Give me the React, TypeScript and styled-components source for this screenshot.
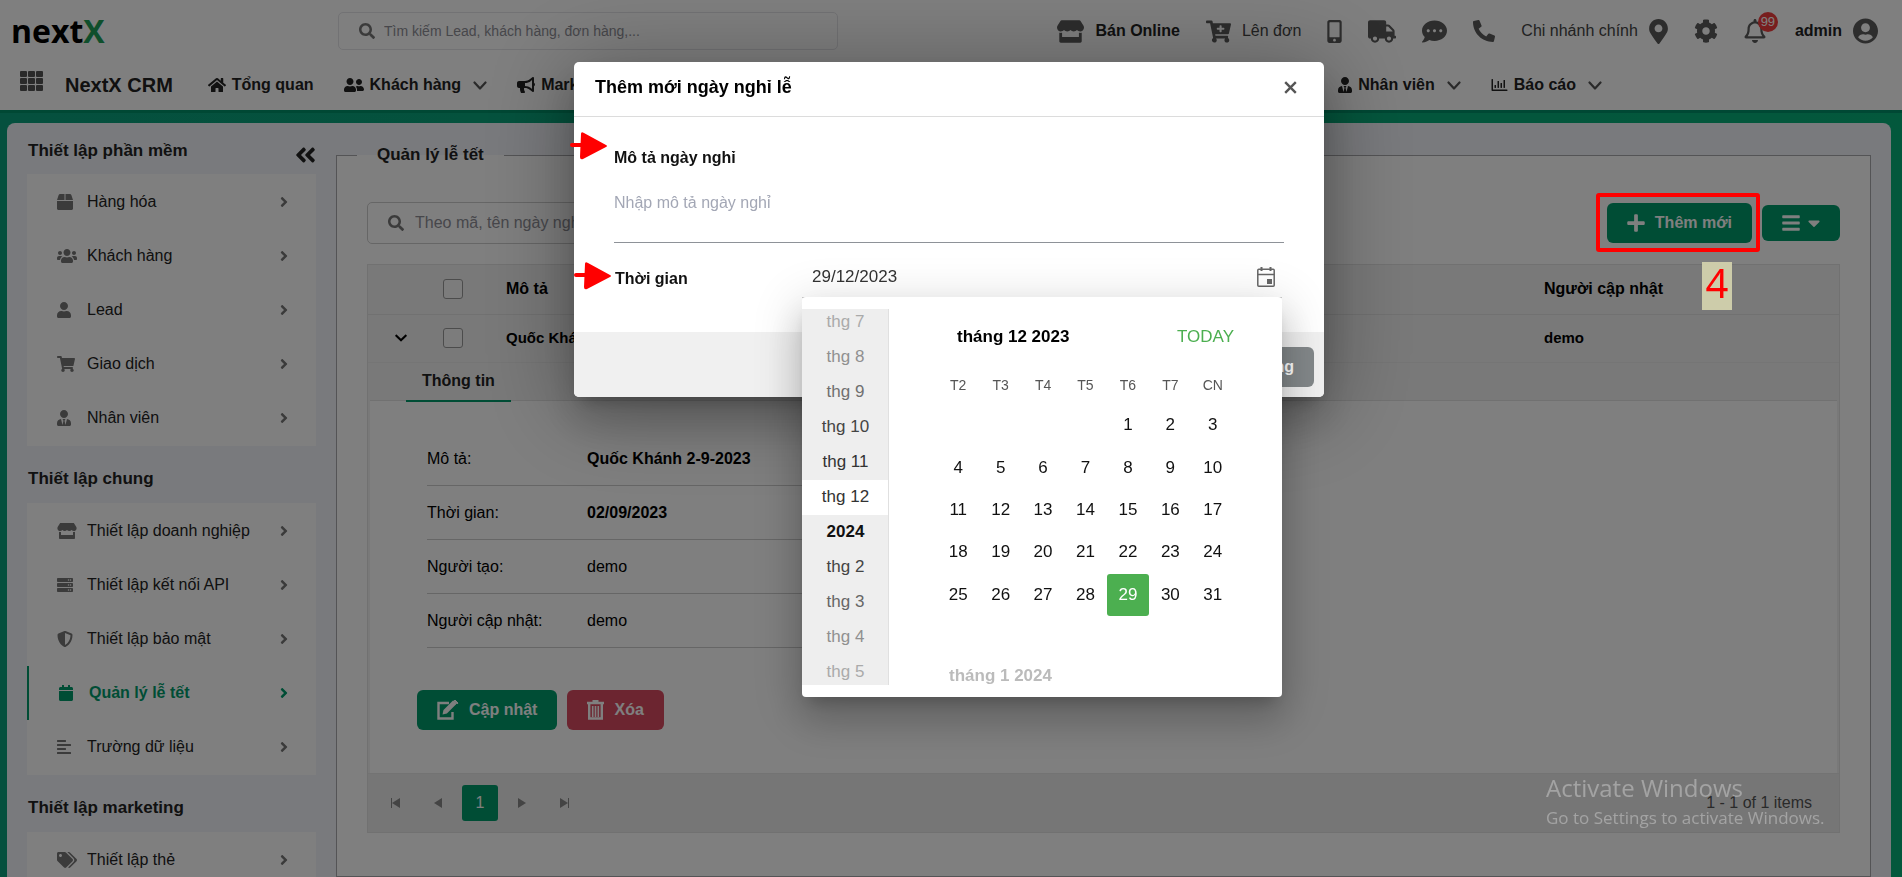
import React from "react";
import styled, { createGlobalStyle, css } from "styled-components";
import type { IconType } from "react-icons";
import {
  FaAlignLeft, FaAngleDoubleLeft, FaAngleRight, FaBox, FaBullhorn, FaCalendar, FaCaretDown, FaCartPlus,
  FaChevronDown, FaCog, FaCommentDots, FaHome, FaMapMarkerAlt, FaPhoneAlt, FaPlus, FaRegBell,
  FaRegChartBar, FaSearch, FaServer, FaShieldAlt, FaShoppingCart, FaStore, FaTags, FaTruck,
  FaUser, FaUserCircle, FaUserFriends, FaUserTie, FaUsers, FaMobileAlt, FaBars,
} from "react-icons/fa";

const GREEN = "#009b6b";

const GlobalStyle = createGlobalStyle`
  *, *::before, *::after { box-sizing: border-box; }
  body {
    margin: 0;
    overflow: hidden;
    font: 16px/20px "Liberation Sans", Arial, sans-serif;
    color: #222;
  }
  button, input { font: inherit; color: inherit; }
  button { border: 0; background: none; padding: 0; cursor: pointer; }
  a { color: inherit; text-decoration: none; }
  svg { display: block; flex: none; }
`;

const GlyphBox = styled.i<{ $w: number; $h: number }>`
  flex: none;
  display: block;
  > svg { width: ${p => p.$w}px; height: ${p => p.$h}px; }
`;
const Glyph = ({ of: Icon, w = 16, h = 16 }: { of: IconType; w?: number; h?: number }) => (
  <GlyphBox $w={w} $h={h}><Icon /></GlyphBox>
);

const Shell = styled.div`
  height: 100vh;
  display: flex;
  flex-direction: column;
  overflow: hidden;
  background: linear-gradient(90deg, #0aa07c, #06b078 100%);
`;

/* ---------- header ---------- */

const Header = styled.header`
  flex: none;
  background: #fff;
  border-bottom: 3px solid #009068;
  box-sizing: content-box;
`;
const TopBar = styled.div`
  display: flex;
  align-items: center;
  height: 62px;
  padding: 0 24px 0 11px;
`;
const Logo = styled.a`
  width: 327px;
  font: 700 32px/40px "Open Sans", sans-serif;
  color: #000;
  span { color: #1f9f58; }
`;
const SearchBox = styled.label<{ $tall?: boolean }>`
  display: flex;
  align-items: center;
  gap: ${p => (p.$tall ? 11 : 9)}px;
  width: 500px;
  height: ${p => (p.$tall ? 42 : 38)}px;
  padding: 0 20px;
  border: 1px solid ${p => (p.$tall ? "#ccc" : "#e4e4e8")};
  border-radius: 5px;
  color: #777;
  input {
    flex: 1;
    min-width: 0;
    border: 0;
    padding: 0;
    outline: 0;
    background: none;
    font-size: ${p => (p.$tall ? 16 : 14)}px;
  }
  input::placeholder { color: #8e8e96; opacity: 1; }
`;
const Tools = styled.div`
  display: flex;
  align-items: center;
  gap: 26px;
  margin-left: auto;
  color: #5a5a5a;
`;
const Tool = styled.button<{ $bold?: boolean; $badge?: boolean }>`
  position: relative;
  display: flex;
  align-items: center;
  gap: 11px;
  padding-right: ${p => (p.$badge ? 3 : 0)}px;
  span { color: ${p => (p.$bold ? "#222" : "#444")}; font-weight: ${p => (p.$bold ? 700 : 400)}; }
`;
const Count = styled.b`
  position: absolute;
  top: -7px;
  left: 14px;
  width: 20px;
  height: 20px;
  border-radius: 50%;
  background: #f03c3c;
  color: #fff;
  font: 13px/20px "Liberation Sans", Arial, sans-serif;
  text-align: center;
`;
const Nav = styled.nav`
  display: flex;
  align-items: center;
  justify-content: space-between;
  height: 48px;
  padding: 0 300px 2px 20px;
`;
const NavGroup = styled.div`
  display: flex;
  align-items: center;
  gap: 30px;
`;
const AppsButton = styled.button`
  padding-bottom: 8px;
`;
const Product = styled.strong`
  margin: 0 5px 0 -8px;
  font-size: 20px;
  line-height: 22px;
`;
const NavLink = styled.a`
  display: flex;
  align-items: center;
  gap: 6px;
  font-weight: 700;
`;

/* ---------- body ---------- */

const Panel = styled.div`
  flex: 1;
  display: flex;
  min-height: 0;
  margin: 10px 11px 0 7px;
  padding-right: 20px;
  border-radius: 8px 8px 0 0;
  background: #f3f5fa;
  overflow: hidden;
`;
const Sidebar = styled.aside`
  position: relative;
  flex: none;
  width: 329px;
  padding: 0 20px;
  overflow: hidden;
`;
const Collapse = styled.button`
  position: absolute;
  top: 20px;
  right: 20px;
`;
const GroupTitle = styled.h2<{ $first?: boolean }>`
  margin: 0;
  padding: ${p => (p.$first ? 18 : 23)}px 0 ${p => (p.$first ? 13 : 14)}px 1px;
  font-size: 17px;
  line-height: 20px;
`;
const MenuCard = styled.div`
  padding: 1px 0;
  background: #fff;
`;
const MenuItem = styled.a<{ $active?: boolean }>`
  display: grid;
  grid-template-columns: 30px 1fr 8px;
  align-items: center;
  height: 54px;
  padding: 0 28px 0 30px;
  > i { color: #777; }
  ${p => p.$active && css`
    border-left: 2px solid ${GREEN};
    color: ${GREEN};
    font-weight: 700;
    > i { color: ${GREEN}; }
  `}
`;
const Content = styled.fieldset`
  flex: 1;
  min-width: 0;
  margin: 22px 0 0;
  padding: 37px 30px 0;
  border: 1px solid #a8a8ac;
  background: #fff;
  legend {
    margin-left: -10px;
    padding: 0 20px;
    font-size: 17px;
    font-weight: 700;
    line-height: 20px;
  }
`;
const Toolbar = styled.div`
  display: flex;
  align-items: center;
  margin-bottom: 20px;
`;
const Actions = styled.div`
  display: flex;
  align-items: center;
  gap: 10px;
  margin-left: auto;
`;
const Marked = styled.div`
  position: relative;
`;
const Highlight = styled.div`
  position: absolute;
  z-index: 30;
  inset: -10px -8px -9px -11px;
  border: 4px solid #f00;
  border-radius: 3px;
  pointer-events: none;
`;
const StepNumber = styled.div`
  position: absolute;
  z-index: 30;
  top: 59px;
  left: 95px;
  width: 30px;
  height: 48px;
  background: #cdccaa;
  color: #f00;
  font: 40px/42px "Noto Sans", sans-serif;
  text-align: center;
`;
const Button = styled.button<{ $tone?: string; $menu?: boolean }>`
  display: flex;
  align-items: center;
  justify-content: center;
  gap: ${p => (p.$menu ? 8 : 10)}px;
  height: ${p => (p.$menu ? 36 : 40)}px;
  padding: 0 20px;
  border-radius: 6px;
  background: ${p => p.$tone ?? GREEN};
  color: #fff;
  font-weight: 700;
`;
const Grid = styled.div`
  border: 1px solid #e2e2e2;
  background: #f3f3f3;
`;
const Table = styled.table`
  width: 100%;
  border-collapse: collapse;
  table-layout: fixed;
  color: #000;
  th, td { padding: 0 12px; text-align: left; font-weight: 700; }
  td:first-child { padding-left: 27px; }
  th { height: 49px; border-bottom: 1px solid #e2e2e2; }
  td { height: 48px; font-size: 15px; }
  input {
    display: block;
    appearance: none;
    width: 20px;
    height: 20px;
    margin: 0;
    border: 1px solid #999;
    border-radius: 3px;
    background: #f8f8f8;
  }
`;
const Tabs = styled.div`
  display: flex;
  height: 38px;
  padding-left: 38px;
  border-top: 1px solid #eaeaea;
`;
const Tab = styled.button`
  height: 39px;
  padding: 0 16px 2px;
  border-bottom: 2px solid ${GREEN};
  font-weight: 700;
`;
const Detail = styled.div`
  margin: 0 2px;
  padding: 31px 47px 43px;
  border-top: 1px solid #e2e2e2;
  background: #fff;
`;
const Facts = styled.dl`
  width: 50%;
  margin: 0 0 42px 10px;
  color: #000;
`;
const Fact = styled.div`
  display: flex;
  align-items: center;
  height: 54px;
  border-bottom: 1px solid #ccc;
  dt { width: 160px; }
  dd { margin: 0; }
`;
const ButtonRow = styled.div`
  display: flex;
  gap: 10px;
`;
const Pager = styled.div`
  display: flex;
  align-items: center;
  height: 59px;
  padding: 0 27px 0 10px;
  border-top: 1px solid #e6e6e6;
  background: #ededed;
  color: #555;
  span { margin-left: auto; }
`;
const PageButton = styled.button<{ $current?: boolean }>`
  display: grid;
  place-items: center;
  width: 36px;
  height: 36px;
  margin-right: 6px;
  border-radius: 3px;
  color: ${p => (p.$current ? "#fff" : "#888")};
  background: ${p => (p.$current ? GREEN : "none")};
`;

/* ---------- dialog ---------- */

const Backdrop = styled.div`
  position: fixed;
  z-index: 10;
  inset: 0;
  display: flex;
  justify-content: center;
  align-items: flex-start;
  padding: 62px 4px 0 0;
  background: rgba(0, 0, 0, 0.5);
`;
const Dialog = styled.section`
  position: relative;
  width: 750px;
  border-radius: 5px;
  background: #fff;
  box-shadow: 0 11px 15px -7px rgba(0, 0, 0, 0.2), 0 24px 38px 3px rgba(0, 0, 0, 0.14), 0 9px 86px 8px rgba(0, 0, 0, 0.3);
`;
const DialogHeader = styled.header`
  display: flex;
  align-items: center;
  justify-content: space-between;
  height: 55px;
  padding: 0 27px 4px 21px;
  border-bottom: 1px solid #dcdcdc;
  color: #000;
  h1 { margin: 0; font-size: 18px; line-height: 24px; }
  button { color: #555; }
`;
const DialogBody = styled.div`
  padding: 31px 40px 34px;
  color: #111;
  label { font-weight: 700; }
`;
const NoteInput = styled.input`
  display: block;
  width: 100%;
  height: 75px;
  margin-bottom: 16px;
  padding: 0 0 4px;
  border: 0;
  border-bottom: 1px solid #8e9298;
  outline: 0;
  &::placeholder { color: #a3a7b5; opacity: 1; }
`;
const DateRow = styled.div`
  position: relative;
  display: flex;
  align-items: center;
  height: 39px;
  padding: 0 2px 0 1px;
  label { width: 187px; }
`;
const DateField = styled.div`
  flex: 1;
  display: flex;
  align-items: center;
  justify-content: space-between;
  height: 39px;
  padding: 0 7px 3px 10px;
  border-bottom: 1px solid #ccc;
  input { width: 160px; border: 0; padding: 0; outline: 0; background: none; color: #333; font-size: 17px; }
`;
const DialogFooter = styled.footer`
  display: flex;
  justify-content: flex-end;
  padding: 15px 10px 10px;
  border-radius: 0 0 5px 5px;
  background: #f0f0f0;
`;
const Arrow = styled.svg<{ $top: number; $left: number }>`
  position: absolute;
  z-index: 30;
  top: ${p => p.$top}px;
  left: ${p => p.$left}px;
`;

/* ---------- date picker ---------- */

const Picker = styled.div`
  position: absolute;
  z-index: 20;
  top: 38px;
  left: 188px;
  right: 2px;
  display: flex;
  padding: 12px 0;
  border-radius: 4px;
  background: #fff;
  font-size: 17px;
  box-shadow: 0 11px 15px -7px rgba(0, 0, 0, 0.2), 0 24px 38px 3px rgba(0, 0, 0, 0.14), 0 9px 46px 8px rgba(0, 0, 0, 0.12);
`;
const Months = styled.div`
  display: flex;
  flex-direction: column;
  justify-content: center;
  flex: none;
  width: 87px;
  height: 376px;
  overflow: hidden;
  background: #eee;
  border-right: 1px solid #e0e0e0;
`;
const Month = styled.button<{ $shade: string; $state?: string }>`
  flex: none;
  height: 35px;
  margin-right: -1px;
  color: ${p => p.$shade};
  font-weight: ${p => (p.$state === "year" ? 700 : 400)};
  ${p => p.$state === "on" && css`background: #fff;`}
`;
const Calendar = styled.div`
  flex: 1;
  height: 376px;
  padding: 0 48px;
  overflow: hidden;
`;
const CalendarHead = styled.div`
  display: flex;
  align-items: center;
  justify-content: space-between;
  height: 56px;
  padding-left: 20px;
  color: #000;
  button { color: #4caf50; }
`;
const Days = styled.div`
  display: grid;
  grid-template-columns: repeat(7, 1fr);
  grid-auto-rows: 1fr;
  height: 212px;
`;
const WeekHead = styled(Days)`
  height: 39px;
  font-size: 14px;
  color: #555;
  text-align: center;
  line-height: 40px;
`;
const Day = styled.button<{ $selected?: boolean; $start?: number }>`
  grid-column-start: ${p => p.$start ?? "auto"};
  border-radius: 3px;
  color: ${p => (p.$selected ? "#fff" : "#111")};
  background: ${p => (p.$selected ? "#4caf50" : "none")};
`;
const NextMonth = styled.strong`
  display: block;
  margin: 50px 0 0 12px;
  color: #bbb;
`;

const Watermark = styled.div`
  position: fixed;
  z-index: 40;
  right: 66px;
  bottom: 47px;
  width: 290px;
  color: rgba(255, 255, 255, 0.33);
  font: 17px/24px "Open Sans", sans-serif;
  pointer-events: none;
  p { margin: 0; }
  p:first-child { font-size: 24px; line-height: 36px; }
`;

/* ---------- drawings ---------- */

const AppsIcon = () => (
  <svg width="23" height="20" viewBox="0 0 23 20" fill="#555">
    {[0, 7, 14].map(y => [0, 8, 16].map(x => <rect key={`${x}-${y}`} x={x} y={y} width="7" height="6" rx="1" />))}
  </svg>
);
const NavChevron = () => (
  <svg width="20" height="9" viewBox="-6 0 20 9" fill="none" stroke="#555" strokeWidth="2.200" strokeLinejoin="round" strokeLinecap="round">
    <path d="M1.500 1.500L7 7.500l5.500-6" />
  </svg>
);
const EditIcon = () => (
  <svg width="22" height="20" viewBox="0 0 22 20" fill="none" stroke="currentColor">
    <path d="M12 3H1.500v15.500h14V12" strokeWidth="2.400" />
    <path d="M5.500 14.500l1-4.500 9-9c1-1 4.500 2.300 3.400 3.500l-9 9z" fill="currentColor" stroke="none" />
    <path d="M17 .8l1-.8 3 3-.8 1z" fill="currentColor" />
  </svg>
);
const TrashIcon = () => (
  <svg width="17" height="20" viewBox="0 0 17 20" fill="none" stroke="currentColor" strokeWidth="2.400">
    <path d="M0 3h17M5.500 1h6M2.200 4v14.500h12.600V4" />
    <path d="M5.700 6v11M8.500 6v11M11.300 6v11" strokeWidth="1.600" />
  </svg>
);
const CloseIcon = () => (
  <svg width="13" height="13" viewBox="0 0 13 13" stroke="currentColor" strokeWidth="2.400">
    <path d="M1.200 1.200l10.600 10.600M11.800 1.200L1.200 11.800" />
  </svg>
);
const CalendarIcon = () => (
  <svg width="18" height="20" viewBox="0 0 18 20" fill="none" stroke="#666" strokeWidth="1.500">
    <rect x=".8" y="2.200" width="16.400" height="17" rx="1" />
    <path d="M.7 7.500h16.600" />
    <path d="M4.500 0v4M13.500 0v4" strokeWidth="2" />
    <rect x="10" y="12" width="5" height="5" fill="#666" stroke="none" />
  </svg>
);
const PagerIcon = ({ flip, bar }: { flip?: boolean; bar?: boolean }) => (
  <svg width="10" height="10" viewBox="0 0 10 10" fill="currentColor">
    <path d={flip ? "M1 0l8 5-8 5z" : "M9 0L1 5l8 5z"} />
    {bar && <rect x={flip ? 9 : 0} y="0" width="1" height="10" />}
  </svg>
);
const RedArrow = ({ top, left }: { top: number; left: number }) => (
  <Arrow $top={top} $left={left} width="38" height="28" viewBox="0 0 38 28" fill="#f00">
    <rect x="0" y="11" width="14" height="4" rx="2" />
    <path d="M11 2q0-3 3-1l22 12q2 1 0 2L13 27q-3 1-3-2z" />
  </Arrow>
);

/* ---------- data ---------- */

type Item = { icon: IconType; w: number; label: string; active?: boolean };

const GROUPS: { title: string; items: Item[] }[] = [
  {
    title: "Thiết lập phần mềm",
    items: [
      { icon: FaBox, w: 16, label: "Hàng hóa" },
      { icon: FaUsers, w: 20, label: "Khách hàng" },
      { icon: FaUser, w: 14, label: "Lead" },
      { icon: FaShoppingCart, w: 18, label: "Giao dịch" },
      { icon: FaUserTie, w: 14, label: "Nhân viên" },
    ],
  },
  {
    title: "Thiết lập chung",
    items: [
      { icon: FaStore, w: 20, label: "Thiết lập doanh nghiệp" },
      { icon: FaServer, w: 16, label: "Thiết lập kết nối API" },
      { icon: FaShieldAlt, w: 16, label: "Thiết lập bảo mật" },
      { icon: FaCalendar, w: 14, label: "Quản lý lễ tết", active: true },
      { icon: FaAlignLeft, w: 14, label: "Trường dữ liệu" },
    ],
  },
  {
    title: "Thiết lập marketing",
    items: [{ icon: FaTags, w: 20, label: "Thiết lập thẻ" }],
  },
];

const FACTS: [string, string, boolean][] = [
  ["Mô tả:", "Quốc Khánh 2-9-2023", true],
  ["Thời gian:", "02/09/2023", true],
  ["Người tạo:", "demo", false],
  ["Người cập nhật:", "demo", false],
];

const MONTHS: [string, string, string?][] = [
  ["thg 7", "#aaa"], ["thg 8", "#909090"], ["thg 9", "#707070"], ["thg 10", "#444"], ["thg 11", "#333"],
  ["thg 12", "#333", "on"], ["2024", "#111", "year"], ["thg 2", "#444"], ["thg 3", "#666"],
  ["thg 4", "#909090"], ["thg 5", "#aaa"],
];

export default function App() {
  return (
    <>
      <GlobalStyle />
      <Shell>
        <Header>
          <TopBar>
            <Logo href="#">next<span>X</span></Logo>
            <SearchBox>
              <Glyph of={FaSearch} />
              <input aria-label="Tìm kiếm" placeholder="Tìm kiếm Lead, khách hàng, đơn hàng,..." />
            </SearchBox>
            <Tools>
              <Tool $bold><Glyph of={FaStore} w={27} h={23} /><span>Bán Online</span></Tool>
              <Tool><Glyph of={FaCartPlus} w={25} h={23} /><span>Lên đơn</span></Tool>
              <Tool aria-label="Điện thoại"><Glyph of={FaMobileAlt} w={15} h={23} /></Tool>
              <Tool aria-label="Giao hàng"><Glyph of={FaTruck} w={28} h={23} /></Tool>
              <Tool aria-label="Tin nhắn"><Glyph of={FaCommentDots} w={25} h={25} /></Tool>
              <Tool aria-label="Gọi"><Glyph of={FaPhoneAlt} w={22} h={22} /></Tool>
              <Tool><span>Chi nhánh chính</span><Glyph of={FaMapMarkerAlt} w={19} h={25} /></Tool>
              <Tool aria-label="Cài đặt"><Glyph of={FaCog} w={24} h={24} /></Tool>
              <Tool $badge aria-label="Thông báo"><Glyph of={FaRegBell} w={22} h={24} /><Count>99</Count></Tool>
              <Tool $bold><span>admin</span><Glyph of={FaUserCircle} w={25} h={26} /></Tool>
            </Tools>
          </TopBar>
          <Nav>
            <NavGroup>
              <AppsButton aria-label="Ứng dụng"><AppsIcon /></AppsButton>
              <Product>NextX CRM</Product>
              <NavLink href="#"><Glyph of={FaHome} w={18} />Tổng quan</NavLink>
              <NavLink href="#"><Glyph of={FaUserFriends} w={20} />Khách hàng<NavChevron /></NavLink>
              <NavLink href="#"><Glyph of={FaBullhorn} w={18} />Marketing</NavLink>
            </NavGroup>
            <NavGroup>
              <NavLink href="#"><Glyph of={FaUserTie} w={14} />Nhân viên<NavChevron /></NavLink>
              <NavLink href="#"><Glyph of={FaRegChartBar} w={17} />Báo cáo<NavChevron /></NavLink>
            </NavGroup>
          </Nav>
        </Header>

        <Panel>
          <Sidebar>
            <Collapse aria-label="Thu gọn"><Glyph of={FaAngleDoubleLeft} w={21} h={24} /></Collapse>
            {GROUPS.map((group, i) => (
              <React.Fragment key={group.title}>
                <GroupTitle $first={i === 0}>{group.title}</GroupTitle>
                <MenuCard>
                  {group.items.map(item => (
                    <MenuItem key={item.label} href="#" $active={item.active}>
                      <Glyph of={item.icon} w={item.w} />
                      <span>{item.label}</span>
                      <Glyph of={FaAngleRight} w={8} h={18} />
                    </MenuItem>
                  ))}
                </MenuCard>
              </React.Fragment>
            ))}
          </Sidebar>

          <Content>
            <legend>Quản lý lễ tết</legend>
            <Toolbar>
              <SearchBox $tall>
                <Glyph of={FaSearch} />
                <input aria-label="Tìm ngày nghỉ" placeholder="Theo mã, tên ngày nghỉ" />
              </SearchBox>
              <Actions>
                <Marked>
                  <Button><Glyph of={FaPlus} w={18} h={20} />Thêm mới</Button>
                  <Highlight />
                  <StepNumber>4</StepNumber>
                </Marked>
                <Button $menu aria-label="Tùy chọn">
                  <Glyph of={FaBars} w={18} h={20} />
                  <Glyph of={FaCaretDown} w={12} h={20} />
                </Button>
              </Actions>
            </Toolbar>

            <Grid>
              <Table>
                <colgroup>
                  <col style={{ width: 63 }} /><col style={{ width: 63 }} /><col /><col style={{ width: 307 }} />
                </colgroup>
                <thead>
                  <tr>
                    <th />
                    <th><input type="checkbox" aria-label="Chọn tất cả" /></th>
                    <th>Mô tả</th>
                    <th>Người cập nhật</th>
                  </tr>
                </thead>
                <tbody>
                  <tr>
                    <td><Glyph of={FaChevronDown} w={12} h={14} /></td>
                    <td><input type="checkbox" aria-label="Chọn Quốc Khánh" /></td>
                    <td>Quốc Khánh 2-9-2023</td>
                    <td>demo</td>
                  </tr>
                </tbody>
              </Table>
              <Tabs><Tab>Thông tin</Tab></Tabs>
              <Detail>
                <Facts>
                  {FACTS.map(([label, value, bold]) => (
                    <Fact key={label}><dt>{label}</dt><dd>{bold ? <b>{value}</b> : value}</dd></Fact>
                  ))}
                </Facts>
                <ButtonRow>
                  <Button><EditIcon />Cập nhật</Button>
                  <Button $tone="#d94a60"><TrashIcon />Xóa</Button>
                </ButtonRow>
              </Detail>
              <Pager>
                <PageButton aria-label="Trang đầu"><PagerIcon bar /></PageButton>
                <PageButton aria-label="Trang trước"><PagerIcon /></PageButton>
                <PageButton $current>1</PageButton>
                <PageButton aria-label="Trang sau"><PagerIcon flip /></PageButton>
                <PageButton aria-label="Trang cuối"><PagerIcon flip bar /></PageButton>
                <span>1 - 1 of 1 items</span>
              </Pager>
            </Grid>
          </Content>
        </Panel>
      </Shell>

      <Backdrop>
        <Dialog role="dialog" aria-labelledby="dialog-title">
          <DialogHeader>
            <h1 id="dialog-title">Thêm mới ngày nghỉ lễ</h1>
            <button aria-label="Close"><CloseIcon /></button>
          </DialogHeader>
          <DialogBody>
            <label htmlFor="note">Mô tả ngày nghỉ</label>
            <NoteInput id="note" placeholder="Nhập mô tả ngày nghỉ" />
            <DateRow>
              <label htmlFor="date">Thời gian</label>
              <DateField>
                <input id="date" defaultValue="29/12/2023" />
                <button aria-label="Mở lịch"><CalendarIcon /></button>
              </DateField>
              <Picker>
                <Months>
                  {MONTHS.map(([label, shade, state]) => (
                    <Month key={label} $shade={shade} $state={state}>{label}</Month>
                  ))}
                </Months>
                <Calendar>
                  <CalendarHead><strong>tháng 12 2023</strong><button>TODAY</button></CalendarHead>
                  <WeekHead>
                    {["T2", "T3", "T4", "T5", "T6", "T7", "CN"].map(d => <span key={d}>{d}</span>)}
                  </WeekHead>
                  <Days>
                    {Array.from({ length: 31 }, (_, i) => (
                      <Day key={i} $start={i === 0 ? 5 : undefined} $selected={i === 28}>{i + 1}</Day>
                    ))}
                  </Days>
                  <NextMonth>tháng 1 2024</NextMonth>
                </Calendar>
              </Picker>
            </DateRow>
          </DialogBody>
          <DialogFooter><Button $tone="#84898b">Đóng</Button></DialogFooter>
          <RedArrow top={70} left={-4} />
          <RedArrow top={200} left={0} />
        </Dialog>
      </Backdrop>

      <Watermark>
        <p>Activate Windows</p>
        <p>Go to Settings to activate Windows.</p>
      </Watermark>
    </>
  );
}
